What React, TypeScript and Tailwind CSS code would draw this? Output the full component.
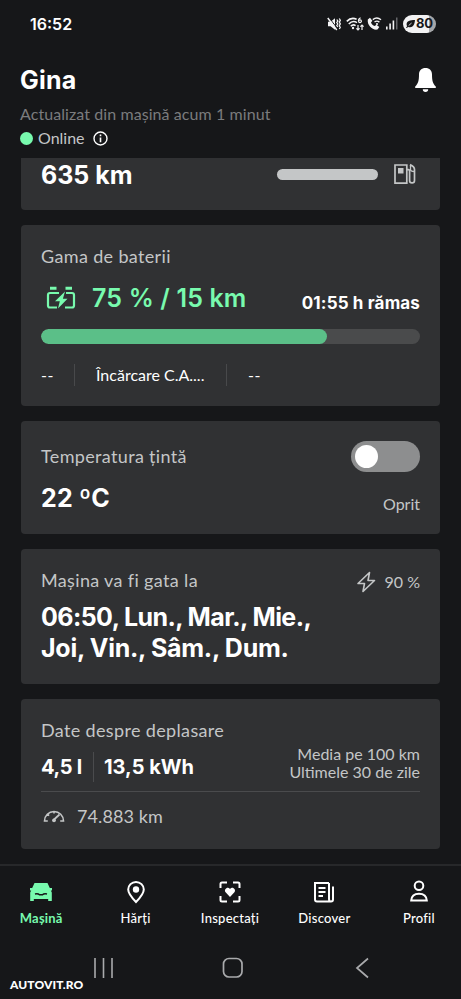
import type { ReactNode } from 'react';

function MuteIcon() {
  return (
    <svg className="h-[14px] w-[14px]" viewBox="0 0 14 14" fill="none">
      <path d="M1 4.8h2.600L8 1.200v11.600L3.600 9.200H1z" fill="#f4f4f5" />
      <path d="M1.800 0.200 10 11.200" stroke="#161719" strokeWidth="1" />
      <path d="M0.800 1 9.800 13" stroke="#f4f4f5" strokeWidth="1.500" />
      <path d="M9.800 2.500l1 1.500-1 1.500 1 1.500-1 1.500 1 1.500M12.300 1.500l1 1.800-1 1.800 1 1.800-1 1.800 1 1.800-1 1.500" stroke="#f4f4f5" strokeWidth="1.300" />
    </svg>
  );
}

function WifiIcon() {
  return (
    <svg className="h-[14px] w-[18px]" viewBox="0 0 18 14" fill="none" stroke="#f4f4f5" strokeWidth="1.600">
      <path d="M0.800 4.400C3.400 1.600 7.200.8 10.600 2.200" />
      <path d="M2.800 7C5 4.600 8.400 4 11 5.600" />
      <path d="M4.800 9.300C6.200 7.800 8 7.600 9.600 8.600" />
      <circle cx="7" cy="11" r="1.200" fill="#f4f4f5" stroke="none" />
      <path d="M14.600.8c-1.600.6-2.200 2-2.100 3.300" strokeWidth="1.200" />
      <circle cx="14" cy="4.200" r="1.400" strokeWidth="1.200" />
      <path d="M12 8v5M10.400 11.400 12 13l1.600-1.600M16 13V8M14.400 9.600 16 8l1.600 1.600" strokeWidth="1.200" />
    </svg>
  );
}

function WifiCallIcon() {
  return (
    <svg className="h-[14px] w-[15px]" viewBox="0 0 15 14" fill="none" stroke="#f4f4f5">
      <path d="M.8 2.600 3 .7l2.400 3.100-1.400 1.700c.7 1.700 1.900 2.900 3.700 3.600l1.700-1.300 2.900 2.200-1.800 2.600C5.600 13.600 0 8.600.8 2.600z" fill="#f4f4f5" stroke="none" />
      <path d="M5.800 2.600c2.600-2 5.800-1.800 8.200.2M7.500 5c1.600-1.200 3.400-1.100 4.900.1" strokeWidth="1.400" />
      <circle cx="10" cy="7" r="1.100" fill="#f4f4f5" stroke="none" />
    </svg>
  );
}

function SignalIcon() {
  return (
    <svg className="h-[13px] w-[12px]" viewBox="0 0 12 13" fill="#f4f4f5">
      <rect x="0" y="9.500" width="1.600" height="3" />
      <rect x="3.300" y="6.500" width="1.600" height="6" />
      <rect x="6.600" y="3.500" width="1.600" height="9" />
      <rect x="10" y="0.500" width="1.500" height="12" fill="#65666a" />
    </svg>
  );
}

function StatusBar() {
  return (
    <div className="flex h-[47px] items-center justify-between pr-[25px] pl-[30px]">
      <span className="font-[Inter] text-[16px] font-semibold">16:52</span>
      <div className="flex items-center">
        <MuteIcon />
        <div className="ml-[5px] flex"><WifiIcon /></div>
        <div className="ml-[3px] flex"><WifiCallIcon /></div>
        <div className="ml-[4px] flex"><SignalIcon /></div>
        <div className="ml-[5px] flex h-[18px] w-[33px] items-center justify-center rounded-full bg-linear-to-r from-[#f2f2f3] from-80% to-[#a5a6a8] to-80% text-[#161719]">
          <svg className="h-[8px] w-[9px]" viewBox="0 0 9 8">
            <path d="M9 0C4 0 .6 1 .6 4.600c0 .8.3 1.300.6 1.700L0 7.400l.6.6 1.600-1.100C6.500 8.400 8.600 5 9 0z" fill="#161719" />
            <path d="M2.600 5.600 5.600 3" stroke="#f2f2f3" strokeWidth=".8" />
          </svg>
          <span className="ml-[1px] font-[Inter] text-[13px] leading-none font-bold">80</span>
        </div>
      </div>
    </div>
  );
}

function Header() {
  return (
    <header className="flex h-[111px] shrink-0 flex-col px-[20px] pt-[18px]">
      <div className="flex h-[32px] items-center justify-between">
        <h1 className="font-[Inter] text-[25px] font-bold tracking-[0.200px]">Gina</h1>
        <svg className="mr-[5px] mb-[2px] h-[24px] w-[21px]" viewBox="0 0 21 24" fill="#fff">
          <path d="M10.500 0C6.500 0 4 2.600 4 6.500c0 6-.8 9-3.800 12.100V20h20.600v-1.400C17.800 15.500 17 12.500 17 6.500 17 2.600 14.500 0 10.500 0zM7.800 21.200h5.400a2.700 2.700 0 0 1-5.400 0z" />
        </svg>
      </div>
      <p className="mt-[7px] text-[16px] leading-[20px] tracking-[0.080px] whitespace-nowrap text-[#7b7c7e]">
        Actualizat din mașină acum 1 minut
      </p>
      <div className="mt-[4px] flex h-[20px] items-center">
        <span className="h-[13px] w-[13px] rounded-full bg-[#78faae]" />
        <span className="ml-[5px] text-[16px] text-[#c4c6c7]">Online</span>
        <svg className="ml-[8px] h-[15px] w-[15px]" viewBox="0 0 15 15" fill="none" stroke="#fff" strokeWidth="1.400">
          <circle cx="7.500" cy="7.500" r="6.500" />
          <path d="M7.500 6.500v4.700M7.500 3.500v1.700" strokeWidth="1.600" />
        </svg>
      </div>
    </header>
  );
}

function Card({ className, children }: { className: string; children: ReactNode }) {
  return <section className={`rounded-[4px] bg-[#303133] px-[20px] ${className}`}>{children}</section>;
}

function Label({ children }: { children: ReactNode }) {
  return (
    <p className="pb-[2px] text-[18px] leading-[20px] tracking-[0.350px] whitespace-nowrap text-[#c4c6c7]">
      {children}
    </p>
  );
}

function FuelCard() {
  return (
    <section className="flex h-[52px] items-start rounded-b-[4px] bg-[#303133] px-[20px]">
      <p className="flex-1 font-[Inter] text-[25px] leading-[34px] font-bold">635 km</p>
      <span className="mt-[11px] h-[11px] w-[101px] rounded-full bg-[#c4c6c7]" />
      <svg className="mt-[5px] mr-[4px] ml-[15px] h-[22px] w-[23px]" viewBox="0 0 23 22" fill="none" stroke="#c4c6c7" strokeWidth="1.700">
        <path d="M2 2h11.800v18.200H2z" />
        <path d="M5 5h5.500v5.500H5z" fill="#c4c6c7" stroke="none" />
        <path d="M14 6.600h1.400c.8 0 1.200.5 1.200 1.200v9.700a2.400 2.400 0 0 0 4.900 0V6.500Q21.500 3.500 17 1.600" />
        <path d="M17.500 2v4.500q0 2 4 2" strokeWidth="1.300" />
      </svg>
    </section>
  );
}

function BatteryCard() {
  return (
    <Card className="mt-[15px] h-[181px] pt-[21px]">
      <Label>Gama de baterii</Label>
      <div className="mt-[15px] flex h-[32px] items-center">
        <svg className="mb-[2px] ml-[5px] h-[24px] w-[30px]" viewBox="0 0 30 24" fill="none" stroke="#78faae" strokeWidth="2.200">
          <path d="M4 2.200h6.500M19.500 2.200H26" strokeWidth="3" />
          <path d="M13 7H4Q2 7 2 9v10.500q0 2 2 2h7M19 21.500h7q2 0 2-2V9q0-2-2-2h-6" />
          <path d="M19 5.500 9 15.300h4.800L12 22.500l9.500-9.800h-4.600z" fill="#78faae" stroke="none" />
        </svg>
        <p className="ml-[16px] font-[Inter] text-[25px] font-semibold tracking-[0.150px] whitespace-nowrap text-[#78faae]">75 % / 15 km</p>
        <p className="mt-[10px] ml-auto font-[Inter] text-[17px] font-bold tracking-[0.150px] whitespace-nowrap">01:55 h rămas</p>
      </div>
      <div className="mt-[14px] h-[15px] overflow-hidden rounded-full bg-[#4a4b4c]">
        <div className="h-full rounded-full bg-[#5bbf88]" style={{ width: '75.5%' }} />
      </div>
      <div className="mt-[20px] flex h-[22px] items-center text-[16px]">
        <span className="w-[33px] tracking-[0.600px]">--</span>
        <span className="h-full w-px bg-[#48494b]" />
        <span className="w-[151px] pl-[21px] whitespace-nowrap">Încărcare C.A....</span>
        <span className="h-full w-px bg-[#48494b]" />
        <span className="pl-[21px] tracking-[0.600px]">--</span>
      </div>
    </Card>
  );
}

function ClimateCard() {
  return (
    <Card className="mt-[15px] flex h-[113px] justify-between">
      <div className="pt-[25px]">
        <Label>Temperatura țintă</Label>
        <p className="mt-[14px] font-[Inter] text-[25px] leading-[32px] font-bold tracking-[0.200px]">22 ºC</p>
      </div>
      <div className="flex flex-col items-end pt-[20px]">
        <span className="flex h-[31px] w-[69px] items-center rounded-full bg-[#8d8e8f] pl-[4px]">
          <span className="h-[23px] w-[23px] rounded-full bg-white" />
        </span>
        <span className="mt-[22px] text-[16px] leading-[20px] text-[#c4c6c7]">Oprit</span>
      </div>
    </Card>
  );
}

function DepartureCard() {
  return (
    <Card className="mt-[15px] h-[135px] pt-[21px]">
      <div className="flex items-center justify-between">
        <Label>Mașina va fi gata la</Label>
        <span className="flex h-[22px] items-center pt-[2px] text-[16px] text-[#c4c6c7]">
          <svg className="mr-[9px] h-[22px] w-[20px]" viewBox="0 0 20 22" fill="none" stroke="#c4c6c7" strokeWidth="1.600" strokeLinejoin="round">
            <path d="M13.500 1.500 2 12.500h6.500L7 20.500 18.500 9.500H12z" />
          </svg>
          90 %
        </span>
      </div>
      <div className="mt-[10px] font-[Inter] text-[25px] leading-[31px] font-bold whitespace-nowrap">
        <p className="tracking-[-0.580px]">06:50, Lun., Mar., Mie.,</p>
        <p className="tracking-[-0.280px]">Joi, Vin., Sâm., Dum.</p>
      </div>
    </Card>
  );
}

function TripCard() {
  return (
    <Card className="mt-[15px] h-[150px] pt-[21px]">
      <Label>Date despre deplasare</Label>
      <div className="flex h-[50px] items-center justify-between border-b border-[#4a4b4d]">
        <div className="flex items-center font-[Inter] text-[20px] font-bold whitespace-nowrap">
          <span className="w-[52px] tracking-[-0.300px]">4,5 l</span>
          <span className="h-[30px] w-px bg-[#4a4b4d]" />
          <span className="pl-[10px]">13,5 kWh</span>
        </div>
        <p className="mb-[8px] text-right text-[16px] leading-[18px] whitespace-nowrap text-[#c4c6c7]">
          Media pe 100 km
          <br />
          Ultimele 30 de zile
        </p>
      </div>
      <div className="mt-[13px] flex items-center text-[18px] leading-[22px] tracking-[0.100px] text-[#c4c6c7]">
        <svg className="mr-[12px] ml-[2px] h-[14px] w-[22px]" viewBox="0 0 22 14" fill="none" stroke="#c4c6c7" strokeWidth="1.600">
          <path d="M4.800 12H1.500a9.500 9.500 0 0 1 19 0h-3.300M11 2v2.600M4.300 5.100l1.800 1.600" />
          <path d="M16.500 5.500 10.500 11" strokeWidth="1.700" />
          <circle cx="11" cy="11.300" r="1.900" fill="#c4c6c7" stroke="none" />
        </svg>
        74.883 km
      </div>
    </Card>
  );
}

const tabs = [
  {
    label: 'Mașină',
    icon: (
      <svg className="h-[24px] w-[24px]" viewBox="0 0 24 24">
        <path d="M5.500 3h13l2.300 5H23v2.500h-1.200l1 2V21h-3.600v-2H4.800v2H1.200v-8.500l1-2H1V8h2.200z" fill="#78faae" />
        <path d="M6 14q3-.8 4.500.8h3Q15 13.200 18 14" fill="none" stroke="#161719" strokeWidth="1.500" />
      </svg>
    ),
  },
  {
    label: 'Hărți',
    icon: (
      <svg className="h-[24px] w-[24px]" viewBox="0 0 24 24" fill="none" stroke="#fff" strokeWidth="2">
        <path d="M12 22Q4.200 14 4.200 9.500a7.800 7.600 0 0 1 15.600 0Q19.800 14 12 22z" />
        <circle cx="12" cy="9.500" r="3.200" fill="#fff" stroke="none" />
      </svg>
    ),
  },
  {
    label: 'Inspectați',
    icon: (
      <svg className="h-[24px] w-[24px]" viewBox="0 0 24 24" fill="none" stroke="#fff" strokeWidth="2">
        <path d="M9 2.500H4q-1.500 0-1.500 1.500v4M15 2.500h5q1.500 0 1.500 1.500v4M2.500 16v4q0 1.500 1.500 1.500h5M21.500 16v4q0 1.500-1.500 1.500h-5" />
        <path d="M12 17 7.600 12.300C5.400 9.500 9.600 5.900 12 8.900c2.400-3 6.600.6 4.400 3.400z" fill="#fff" stroke="none" />
      </svg>
    ),
  },
  {
    label: 'Discover',
    icon: (
      <svg className="h-[24px] w-[24px]" viewBox="0 0 24 24" fill="none" stroke="#fff" strokeWidth="2">
        <path d="M17 3H3v16.500q0 2 2 2h14q2 0 2-2V6.500M17 3v16q0 2.500 2 2.500" />
        <path d="M6.500 8h7M6.500 12h7M6.500 16h4.500" />
      </svg>
    ),
  },
  {
    label: 'Profil',
    icon: (
      <svg className="h-[24px] w-[24px]" viewBox="0 0 24 24" fill="none" stroke="#fff" strokeWidth="2">
        <circle cx="12" cy="5.800" r="4.300" />
        <path d="M4.200 20.500c.3-4.300 3.200-6.800 7.800-6.800s7.500 2.500 7.800 6.800z" />
      </svg>
    ),
  },
];

function TabBar() {
  return (
    <nav className="mt-[15px] -mr-[5px] -ml-[6px] flex h-[71px] border-t-2 border-[#27282a]">
      {tabs.map((tab, i) => (
        <div key={tab.label} className="flex flex-1 flex-col items-center pt-[14px]">
          {tab.icon}
          <span
            className={`mt-[6px] text-[13px] leading-[17px] whitespace-nowrap ${
              i === 0 ? 'font-bold tracking-[0.200px] text-[#78faae]' : 'font-medium tracking-[0.250px] text-white'
            }`}
          >
            {tab.label}
          </span>
        </div>
      ))}
    </nav>
  );
}

function SystemNav() {
  return (
    <div className="relative flex h-[64px] items-start pt-[22px] pl-[93px]">
      <svg className="h-[22px] w-[22px]" viewBox="0 0 22 22" stroke="#a9aaac" strokeWidth="1.600">
        <path d="M2 1v20M10.500 1v20M19 1v20" />
      </svg>
      <svg className="ml-[107px] h-[22px] w-[22px]" viewBox="0 0 22 22" fill="none" stroke="#a9aaac" strokeWidth="1.700">
        <rect x="1.500" y="1.500" width="18.500" height="18.500" rx="5.500" />
      </svg>
      <svg className="ml-[111px] h-[22px] w-[14px]" viewBox="0 0 14 22" fill="none" stroke="#a9aaac" strokeWidth="1.700">
        <path d="M13 1.500 2 11l11 9.500" />
      </svg>
      <span className="absolute top-[42px] left-[10px] text-[12px] leading-[16px] font-black tracking-[0.100px]">AUTOVIT.RO</span>
    </div>
  );
}

export default function App() {
  return (
    <div className="flex h-[999px] w-[461px] flex-col overflow-hidden bg-[#161719] font-[Lato,sans-serif] text-white">
      <StatusBar />
      <Header />
      <main className="px-[21px]">
        <FuelCard />
        <BatteryCard />
        <ClimateCard />
        <DepartureCard />
        <TripCard />
      </main>
      <TabBar />
      <SystemNav />
    </div>
  );
}
